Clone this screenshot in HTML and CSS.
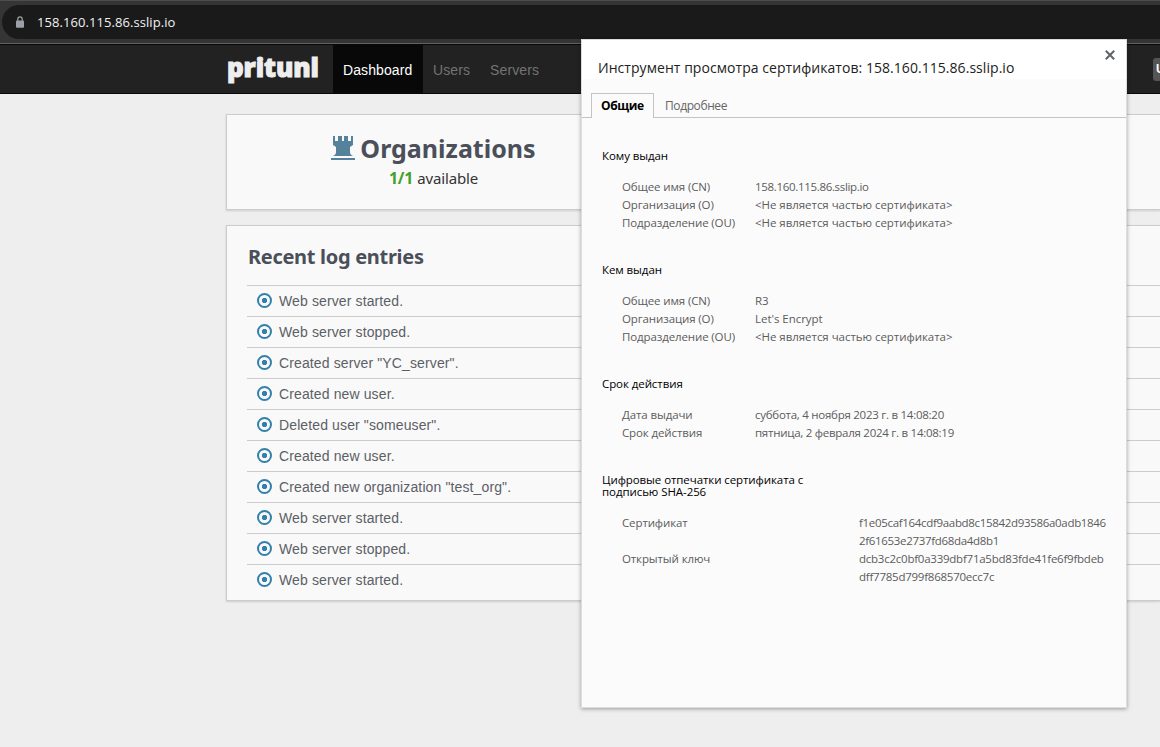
FILE: index.html
```html
<!DOCTYPE html>
<html lang="ru">
<head>
<meta charset="utf-8">
<title>Pritunl</title>
<link rel="stylesheet" href="styles.css">
</head>
<body>
<div class="toolbar">
  <div class="address">
    <svg class="lock" width="10" height="12" viewBox="0 0 10 12"><rect x="1" y="4.5" width="8" height="7.2" rx=".8" fill="#9aa0a6"/><path d="M2.8 5V3a2.2 2.2 0 0 1 4.4 0v2" fill="none" stroke="#9aa0a6" stroke-width="1.2"/></svg>
    <span class="url">158.160.115.86.sslip.io</span>
  </div>
</div>
<nav class="navbar">
  <div class="brand">pritunl</div>
  <a class="nav-item active">Dashboard</a>
  <a class="nav-item">Users</a>
  <a class="nav-item">Servers</a>
  <span class="upgrade">U</span>
</nav>
<main class="page">
  <section class="panel summary">
    <div class="stat">
      <h2><svg class="rook" width="24" height="25" viewBox="0 0 24 25" fill="#56819b"><path d="M2 0h2v5h3V0h4v5h2V0h4v5h3V0h2v9l-3 2v5c0 2 1 3 3 4H2c2-1 3-2 3-4v-5L2 9z"/><rect y="22" width="24" height="2"/></svg><span>Organizations</span></h2>
      <p><b>1/1</b> <span class="avail">available</span></p>
    </div>
  </section>
  <section class="panel logs">
    <h3>Recent log entries</h3>
    <ul>
      <li><i class="dot"></i>Web server started.</li>
      <li><i class="dot"></i>Web server stopped.</li>
      <li><i class="dot"></i>Created server "YC_server".</li>
      <li><i class="dot"></i>Created new user.</li>
      <li><i class="dot"></i>Deleted user "someuser".</li>
      <li><i class="dot"></i>Created new user.</li>
      <li><i class="dot"></i>Created new organization "test_org".</li>
      <li><i class="dot"></i>Web server started.</li>
      <li><i class="dot"></i>Web server stopped.</li>
      <li><i class="dot"></i>Web server started.</li>
    </ul>
  </section>
</main>
<div class="dialog">
  <header class="dialog-title"><span>Инструмент просмотра сертификатов: 158.160.115.86.sslip.io</span>
    <svg class="close" width="10" height="10" viewBox="0 0 10 10"><path d="M.8.8l8.400 8.400M9.200.8L.8 9.200" stroke="#5f6368" stroke-width="2"/></svg>
  </header>
  <div class="tabs"><span class="tab selected">Общие</span><span class="tab">Подробнее</span></div>
  <div class="details">
    <section class="group">
      <h4>Кому выдан</h4>
      <dl>
        <dt>Общее имя (CN)</dt><dd class="numeric">158.160.115.86.sslip.io</dd>
        <dt>Организация (O)</dt><dd>&lt;Не является частью сертификата&gt;</dd>
        <dt>Подразделение (OU)</dt><dd>&lt;Не является частью сертификата&gt;</dd>
      </dl>
    </section>
    <section class="group">
      <h4>Кем выдан</h4>
      <dl>
        <dt>Общее имя (CN)</dt><dd>R3</dd>
        <dt>Организация (O)</dt><dd>Let's Encrypt</dd>
        <dt>Подразделение (OU)</dt><dd>&lt;Не является частью сертификата&gt;</dd>
      </dl>
    </section>
    <section class="group validity">
      <h4>Срок действия</h4>
      <dl>
        <dt>Дата выдачи</dt><dd class="date">суббота, 4 ноября 2023 г. в 14:08:20</dd>
        <dt>Срок действия</dt><dd class="date">пятница, 2 февраля 2024 г. в 14:08:19</dd>
      </dl>
    </section>
    <section class="group prints">
      <h4>Цифровые отпечатки сертификата с<br>подписью SHA-256</h4>
      <dl>
        <dt>Сертификат</dt><dd class="numeric">f1e05caf164cdf9aabd8c15842d93586a0adb1846<br>2f61653e2737fd68da4d8b1</dd>
        <dt>Открытый ключ</dt><dd class="hash">dcb3c2c0bf0a339dbf71a5bd83fde41fe6f9fbdeb<br>dff7785d799f868570ecc7c</dd>
      </dl>
    </section>
  </div>
</div>
</body>
</html>
```
FILE: styles.css
```css
* { box-sizing: border-box; }
body { margin: 0; width: 1160px; height: 747px; overflow: hidden; position: relative; background: #eee; font-family: "Liberation Sans", Arial, sans-serif; }
h2, h3, h4, p, ul, dl, dd { margin: 0; padding: 0; }
.toolbar { height: 44px; padding: 4px 0 0 2px; background: #353535; border-top: 1px solid #4d4d4d; border-bottom: 1px solid #626262; }
.address { height: 34px; border-radius: 17px 0 0 17px; background: #1a1a1a; display: flex; align-items: center; padding-left: 13px; }
.lock { margin-right: 12px; }
.url { font: 13px/18px "Open Sans", sans-serif; color: #f1f1f1; letter-spacing: .07px; white-space: nowrap; }
.navbar { height: 50px; background: #222; border-top: 1px solid #080808; border-bottom: 1px solid #080808; padding-left: 226px; display: flex; font-size: 14px; line-height: 50px; }
.brand { width: 107px; padding-left: 1px; font: 800 26px/45px "Open Sans", sans-serif; color: #eee; -webkit-text-stroke: 1px #eee; stroke-linejoin: round; letter-spacing: -.1px; }
.nav-item { padding: 0 10px; color: #737373; letter-spacing: .1px; }
.nav-item.active { width: 90px; background: #080808; color: #fff; }
.upgrade { margin: 13px 0 0 auto; width: 7px; height: 23px; overflow: hidden; background: #555; border-radius: 3px 0 0 3px; color: #fff; font: bold 12px/23px "Liberation Sans", sans-serif; padding-left: 3px; }
.page { padding: 20px 0 0 226px; }
.panel { border: 1px solid #ccc; border-right: 0; background: #f9f9f9; box-shadow: 0 1px 2px #ccc; }
.summary { height: 96px; }
.stat { width: 413px; text-align: center; padding-top: 15px; }
.stat h2 { display: flex; justify-content: center; align-items: center; gap: 5px; height: 36px; font: bold 25px/36px "Noto Sans", sans-serif; color: #4a4f5a; }
.stat p { padding-left: 0; font: 16px/24px "Noto Sans", sans-serif; color: #333; }
.stat p b { color: #45a02b; letter-spacing: -.3px; }
.avail { font-size: 15px; letter-spacing: -.15px; }
.logs { margin-top: 15px; height: 376px; padding: 17px 0 0 20px; }
.logs h3 { height: 42px; padding-left: 1px; font: bold 20px/28px "Noto Sans", sans-serif; letter-spacing: -.3px; color: #4a4f5a; }
.logs ul { list-style: none; }
.logs li { height: 31px; border-top: 1px solid #ccc; display: flex; align-items: center; padding-left: 10px; font-size: 14px; color: #5c5f66; letter-spacing: .12px; }
.dot { width: 15px; height: 15px; border: 2px solid #3480ad; border-radius: 50%; background: radial-gradient(circle, #3480ad 2.3px, transparent 3px); margin: 0 7px 2px 0; }
.dialog { position: absolute; left: 581px; top: 39px; width: 546px; height: 669px; background: #fbfbfb; border: 1px solid #ddd; box-shadow: 0 1px 4px rgba(0,0,0,.35); font-family: "Open Sans", sans-serif; }
.dialog-title { height: 39px; background: #fff; padding: 17px 11px 0 16px; display: flex; justify-content: space-between; font-size: 14px; line-height: 22px; letter-spacing: .05px; color: #222; white-space: nowrap; }
.close { margin-top: -7px; flex: none; }
.tabs { height: 39px; padding: 14px 0 0 9px; display: flex; border-bottom: 1px solid #c4c4c4; font-size: 12px; line-height: 25px; letter-spacing: -.4px; color: #666; }
.tab { height: 25px; padding: 0 11px; white-space: nowrap; letter-spacing: -.4px; }
.tab.selected { width: 63px; padding-left: 9px; background: #fbfbfb; border: 1px solid #c4c4c4; border-bottom: 0; color: #000; font-weight: bold; line-height: 24px; }
.details { padding: 32px 0 0 20px; font-size: 11.500px; }
.group { height: 114px; }
.validity { height: 96px; }
.group h4 { font-size: 11.500px; font-weight: normal; line-height: 12px; letter-spacing: -.08px; color: #000; margin-bottom: 16px; }
.group dl { display: grid; grid-template-columns: 133px 1fr; padding-left: 20px; line-height: 18px; color: #5c5c5c; white-space: nowrap; }
.group dt { letter-spacing: -.12px; }
.group dd { letter-spacing: -.04px; }
.group .numeric { letter-spacing: -.32px; }
.group .date { letter-spacing: -.26px; }
.group .hash { letter-spacing: -.24px; }
.prints dl { grid-template-columns: 237px 1fr; }
```
